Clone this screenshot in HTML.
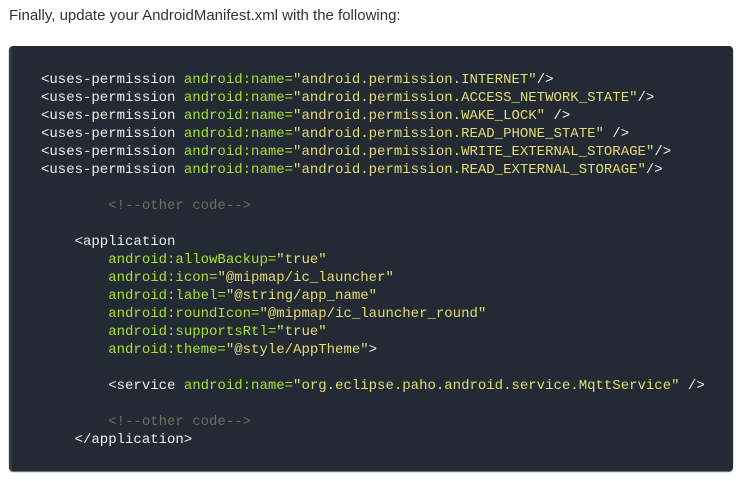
<!DOCTYPE html>
<html><head><meta charset="utf-8"><style>
body{margin:0;width:740px;height:481px;background:#fff;overflow:hidden}
p{position:absolute;left:9px;top:7px;margin:0;font:15px/18px "Liberation Sans",Arial,sans-serif;color:#333}
pre{position:absolute;left:9px;top:46px;width:724px;height:425px;box-sizing:border-box;margin:0;background:#232a34;border-left:3px solid #353c47;border-radius:4px;padding:25px 0 0 29px;font:14px/18px "Liberation Mono",monospace;color:#f0f0f0;box-shadow:0 1px 1px #555}
.a{color:#a6e22e}.s{color:#e6db74}.c{color:#6f6b5e}
</style></head><body>
<p>Finally, update your AndroidManifest.xml with the following:</p>
<pre>&lt;uses-permission <span class="a">android:name=</span><span class="s">"android.permission.INTERNET"</span>/&gt;
&lt;uses-permission <span class="a">android:name=</span><span class="s">"android.permission.ACCESS_NETWORK_STATE"</span>/&gt;
&lt;uses-permission <span class="a">android:name=</span><span class="s">"android.permission.WAKE_LOCK"</span> /&gt;
&lt;uses-permission <span class="a">android:name=</span><span class="s">"android.permission.READ_PHONE_STATE"</span> /&gt;
&lt;uses-permission <span class="a">android:name=</span><span class="s">"android.permission.WRITE_EXTERNAL_STORAGE"</span>/&gt;
&lt;uses-permission <span class="a">android:name=</span><span class="s">"android.permission.READ_EXTERNAL_STORAGE"</span>/&gt;

        <span class="c">&lt;!--other code--&gt;</span>

    &lt;application
        <span class="a">android:allowBackup=</span><span class="s">"true"</span>
        <span class="a">android:icon=</span><span class="s">"@mipmap/ic_launcher"</span>
        <span class="a">android:label=</span><span class="s">"@string/app_name"</span>
        <span class="a">android:roundIcon=</span><span class="s">"@mipmap/ic_launcher_round"</span>
        <span class="a">android:supportsRtl=</span><span class="s">"true"</span>
        <span class="a">android:theme=</span><span class="s">"@style/AppTheme"</span>&gt;

        &lt;service <span class="a">android:name=</span><span class="s">"org.eclipse.paho.android.service.MqttService"</span> /&gt;

        <span class="c">&lt;!--other code--&gt;</span>
    &lt;/application&gt;</pre>
</body></html>
